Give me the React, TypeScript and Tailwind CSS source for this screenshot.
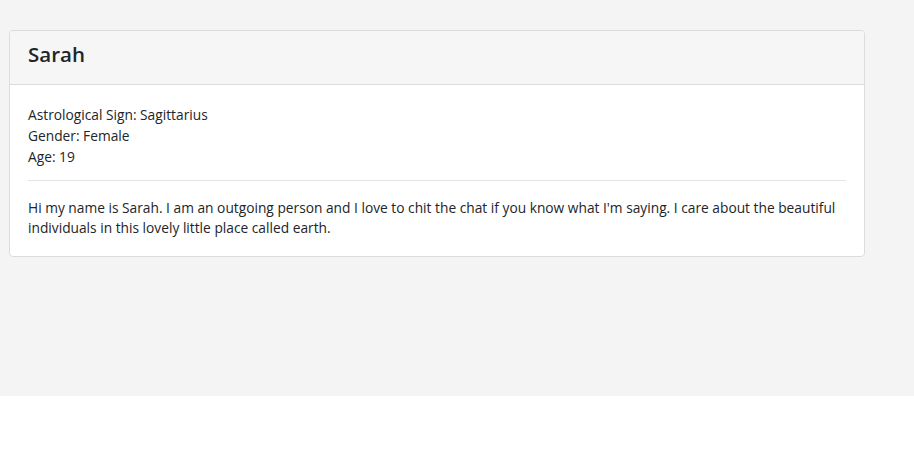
export default function App() {
  return (
    <div className="min-h-[460px] bg-white" style={{ fontFamily: '"Open Sans", "Noto Sans", sans-serif' }}>
      <div className="h-[396px] bg-[#f4f4f4] pt-[30px] pl-[9px] pr-[49px]">
        <div className="rounded border border-[#dcdcdc] bg-white text-[#212529] overflow-hidden">
          <div className="h-[54px] flex items-center px-[18px] pb-[7px] bg-[#f6f6f6] border-b border-[#dcdcdc]">
            <h2 className="text-[20.5px] font-semibold leading-none">Sarah</h2>
          </div>
          <div className="px-[18px] pt-[19px] pb-[18px] text-[13.75px]">
            <div className="leading-[21px]">
              <p>Astrological Sign: Sagittarius</p>
              <p>Gender: Female</p>
              <p>Age: 19</p>
            </div>
            <hr className="mt-[13px] mb-[17px] border-t border-[#e4e4e4]" />
            <p className="leading-[20px]">
              Hi my name is Sarah. I am an outgoing person and I love to chit the chat if you know what I'm saying. I care about the beautiful individuals in this lovely little place called earth.
            </p>
          </div>
        </div>
      </div>
    </div>
  )
}
